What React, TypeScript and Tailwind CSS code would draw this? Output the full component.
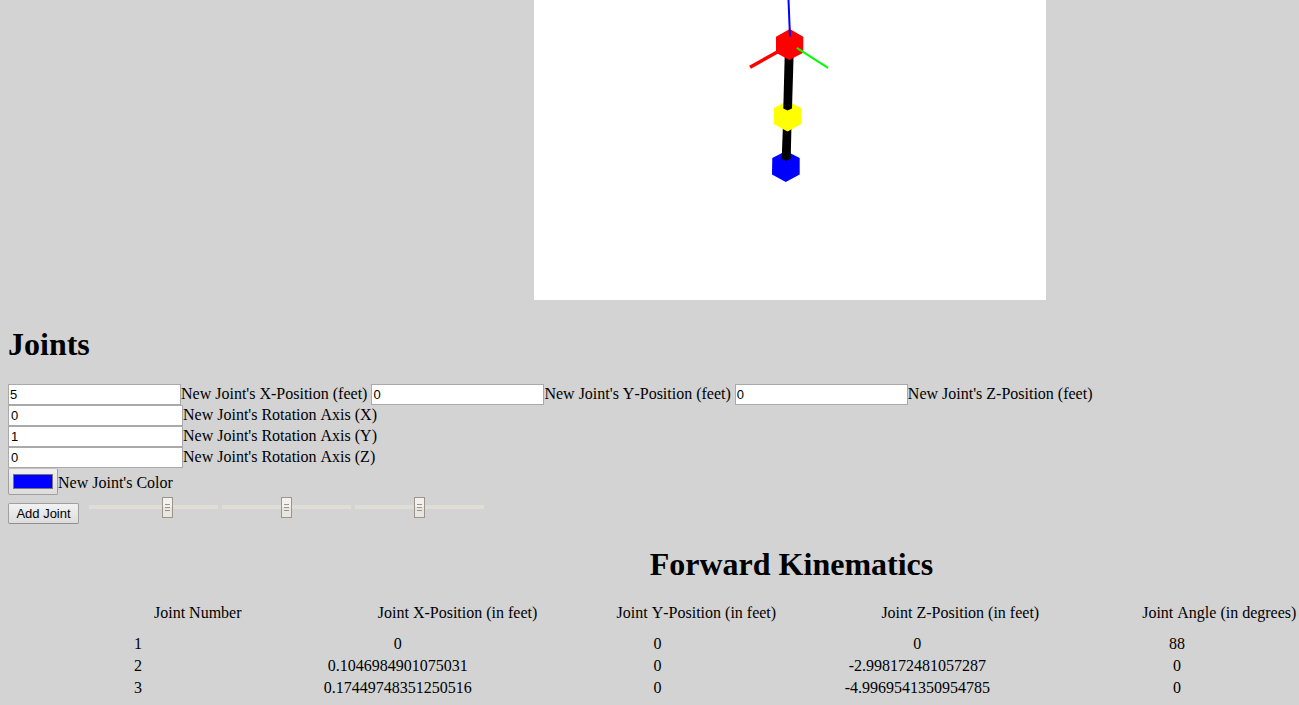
import { useState } from "react";

const positionFields = [
  { id: "pos-x", label: "New Joint's X-Position (feet)", value: "5" },
  { id: "pos-y", label: "New Joint's Y-Position (feet)", value: "0" },
  { id: "pos-z", label: "New Joint's Z-Position (feet)", value: "0" },
];

const axisFields = [
  { id: "axis-x", label: "New Joint's Rotation Axis (X)", value: "0" },
  { id: "axis-y", label: "New Joint's Rotation Axis (Y)", value: "1" },
  { id: "axis-z", label: "New Joint's Rotation Axis (Z)", value: "0" },
];

const columns = [
  { title: "Joint Number", indent: "pl-[154px]" },
  { title: "Joint X-Position (in feet)", indent: "pl-[118px]" },
  { title: "Joint Y-Position (in feet)", indent: "pl-[97px]" },
  { title: "Joint Z-Position (in feet)", indent: "pl-[102px]" },
  { title: "Joint Angle (in degrees)", indent: "pl-[103px]" },
];

const joints = [
  ["1", "0", "0", "0", "88"],
  ["2", "0.1046984901075031", "0", "-2.998172481057287", "0"],
  ["3", "0.17449748351250516", "0", "-4.9969541350954785", "0"],
];

const angles = [62, 50, 50];

function ArmView() {
  return (
    <svg viewBox="0 0 512 300" className="block w-[512px] max-w-full bg-white" role="img" aria-label="Robot arm">
      <polygon points="252,151 265.7,158 265.7,174.5 251.8,182 238,174.5 238.3,158" fill="#00f" />
      <polygon points="249,124 257.5,124 256.7,159 251.8,160.8 247.7,159" fill="#000" />
      <polygon points="253.5,101 267.3,108 267.3,124 253.5,131.5 239.7,124 239.9,108" fill="#ff0" />
      <polygon points="250.8,52 259.7,52 258,108.5 253.5,110.5 249.3,108.5" fill="#000" />
      <line x1="246" y1="50.5" x2="216" y2="67.3" stroke="#f00" strokeWidth="3.5" />
      <polygon points="255.8,29 269.3,36.7 269.3,52.7 255.2,60 242,52.7 242,36.7" fill="#f00" />
      <line x1="254.5" y1="0" x2="256" y2="36.5" stroke="#00f" strokeWidth="2" />
      <line x1="262.8" y1="47.8" x2="294" y2="67.8" stroke="#0f0" strokeWidth="2" />
    </svg>
  );
}

function AngleSlider({ name, initial }: { name: string; initial: number }) {
  const [value, setValue] = useState(initial);
  return (
    <input
      type="range"
      min={0}
      max={100}
      value={value}
      aria-label={name}
      onChange={(e) => setValue(Number(e.target.value))}
      className="h-[21px] w-[129px] appearance-none bg-transparent [&::-webkit-slider-runnable-track]:h-1 [&::-webkit-slider-runnable-track]:bg-[#e0dcd6] [&::-webkit-slider-thumb]:-mt-2 [&::-webkit-slider-thumb]:h-[21px] [&::-webkit-slider-thumb]:w-[11px] [&::-webkit-slider-thumb]:appearance-none [&::-webkit-slider-thumb]:border [&::-webkit-slider-thumb]:border-[#9c948b] [&::-webkit-slider-thumb]:bg-[linear-gradient(#9c948b,#9c948b),linear-gradient(#9c948b,#9c948b),linear-gradient(#9c948b,#9c948b),linear-gradient(#f3f1ee_50%,#e9e5e0_50%)] [&::-webkit-slider-thumb]:bg-[length:5px_1px,5px_1px,5px_1px,100%_100%] [&::-webkit-slider-thumb]:bg-[position:2px_6px,2px_9px,2px_12px,0_0] [&::-webkit-slider-thumb]:bg-no-repeat"
    />
  );
}

export default function App() {
  return (
    <main className="min-h-screen overflow-x-hidden bg-[#d3d3d3] font-['Liberation_Serif','Times_New_Roman',serif] text-[16px] leading-[21px] text-black [font-kerning:none]">
      <div className="flex justify-center pl-[281px]">
        <ArmView />
      </div>

      <form className="px-2" onSubmit={(e) => e.preventDefault()}>
        <h1 className="mt-[26px] mb-[21px] text-[32px] leading-[37px] font-bold">Joints</h1>
        <div className="flex flex-wrap gap-x-1">
          {positionFields.map((f) => (
            <div key={f.id} className="flex">
              <input
                id={f.id}
                type="text"
                defaultValue={f.value}
                className="h-[21px] w-[173px] border border-[#a9a9a9] bg-white px-px font-['Liberation_Sans',Arial,sans-serif] text-[13px]"
              />
              <label htmlFor={f.id} className="leading-[19px]">{f.label}</label>
            </div>
          ))}
        </div>
        {axisFields.map((f) => (
          <div key={f.id} className="flex">
            <input
              id={f.id}
              type="text"
              defaultValue={f.value}
              className="h-[21px] w-[175px] border border-[#a9a9a9] bg-white px-0.5 font-['Liberation_Sans',Arial,sans-serif] text-[13px]"
            />
            <label htmlFor={f.id} className="leading-[19px]">{f.label}</label>
          </div>
        ))}
        <div className="flex items-center">
          <input
            id="color"
            type="color"
            defaultValue="#0000ff"
            className="h-[27px] w-[50px] appearance-none rounded-xs border border-[#a0a0a0] border-t-[#c0c0c0] bg-linear-to-b from-[#f0f0f0] to-[#dddddd] px-1 py-[5px] [&::-webkit-color-swatch]:rounded-none [&::-webkit-color-swatch]:border [&::-webkit-color-swatch]:border-[#777777] [&::-webkit-color-swatch-wrapper]:p-0"
          />
          <label htmlFor="color" className="pt-0.5">New Joint's Color</label>
        </div>
        <div className="flex items-start">
          <button
            type="submit"
            className="mt-2 mr-2.5 h-[21px] w-[71px] rounded-xs border border-[#a0a0a0] border-b-[#8f8f8f] bg-linear-to-b from-[#f2f2f2] to-[#dddddd] font-['Liberation_Sans',Arial,sans-serif] text-[13px] leading-[19px] whitespace-nowrap"
          >
            Add Joint
          </button>
          <div className="mt-px flex gap-1">
            {angles.map((a, i) => (
              <AngleSlider key={i} name={`Joint ${i + 1} angle`} initial={a} />
            ))}
          </div>
        </div>
      </form>

      <section>
        <h1 className="mt-[22px] mb-[19px] pl-[284px] text-center text-[32px] leading-[37px] font-bold">Forward Kinematics</h1>
        <table className="w-full table-fixed leading-[22px]">
          <thead>
            <tr>
              {columns.map((c) => (
                <th key={c.title} scope="col" className={`pb-[9px] text-left font-normal whitespace-nowrap ${c.indent}`}>
                  {c.title}
                </th>
              ))}
            </tr>
          </thead>
          <tbody>
            {joints.map((row) => (
              <tr key={row[0]}>
                {row.map((cell, i) => (
                  <td key={i} className="pl-4 text-center">
                    {cell}
                  </td>
                ))}
              </tr>
            ))}
          </tbody>
        </table>
      </section>
    </main>
  );
}
